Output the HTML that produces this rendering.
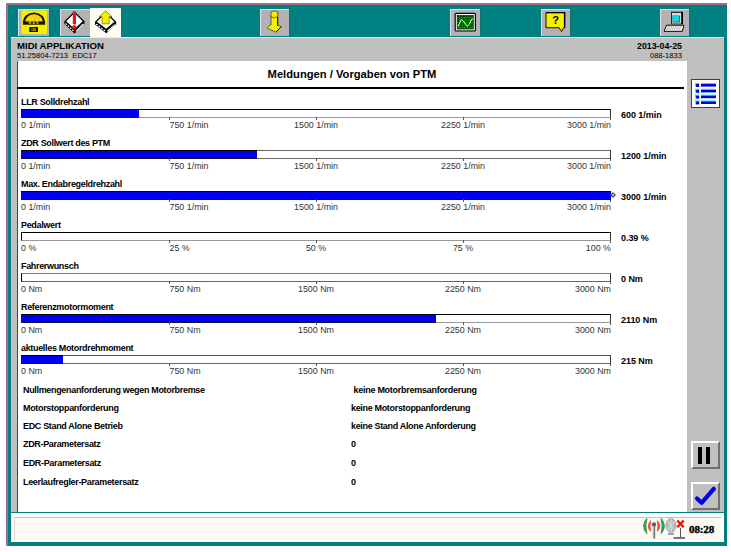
<!DOCTYPE html>
<html><head><meta charset="utf-8"><title>Meldungen / Vorgaben von PTM</title>
<style>
html,body{margin:0;padding:0;}
body{width:731px;height:552px;background:#fff;overflow:hidden;position:relative;font-family:"Liberation Sans",sans-serif;color:#000;}
.abs{position:absolute;}
#frame{left:6px;top:3px;width:721px;height:543px;background:#008080;}
#bt{left:6px;top:3px;width:721px;height:2px;background:#a0708c;}
#bl{left:6px;top:3px;width:2px;height:543px;background:#a0708c;}
.tb{top:9px;height:27px;background:#b2b2b2;box-shadow:inset 1px 1px 0 #dcdce4, 1px 0 0 #186c6c;}
#panel{left:11px;top:37px;width:713px;height:475px;background:#c0c0c0;box-shadow:inset 0 1px 0 #e8e8e8;}
#content{left:17px;top:61px;width:670px;height:451px;background:#fff;border-left:1px solid #444;box-sizing:border-box;}
#status{left:11px;top:513px;width:713px;height:29px;background:#fff;}
#status .in{left:3px;top:4px;width:707px;height:23px;background:#fffaf4;border-top:1px solid #c8c0bc;border-left:1px solid #dcd4d0;box-sizing:border-box;}
.h1{font-weight:bold;font-size:9.6px;line-height:10px;white-space:pre;}
.h2{font-size:7.6px;line-height:8px;white-space:pre;color:#000;}
.lab{left:21px;font-weight:bold;font-size:9px;line-height:10px;letter-spacing:-0.33px;white-space:pre;}
.val{left:621px;font-weight:bold;font-size:9px;line-height:10px;letter-spacing:-0.05px;white-space:pre;}
.bar{left:21px;width:590px;height:9px;border-top:1px solid #000;border-left:1px solid #000;border-right:1px solid #333;border-bottom:1px solid #999;box-sizing:border-box;}
.fill{left:21px;height:9px;background:#0000f0;border-top:1px solid #000;border-bottom:1px solid #114;box-sizing:border-box;}
.tk{font-size:8.9px;line-height:10px;white-space:pre;color:#333;}
.tick{width:1px;height:3px;background:#555;}
.txt{left:23px;font-weight:bold;font-size:9px;line-height:10px;letter-spacing:-0.33px;white-space:pre;}
.txv{left:351px;font-weight:bold;font-size:9px;line-height:10px;letter-spacing:-0.33px;white-space:pre;}
.btn{left:691px;width:29px;height:28px;background:#c0c0c0;box-sizing:border-box;border-top:2px solid #fff;border-left:2px solid #fff;border-right:2px solid #707070;border-bottom:2px solid #707070;}
</style></head><body>
<div class="abs" id="frame"></div>
<div class="abs" id="bt"></div><div class="abs" id="bl"></div>

<!-- toolbar -->
<div class="abs tb" style="left:18px;width:31px;"></div>
<div class="abs tb" style="left:60px;width:30px;"></div>
<div class="abs" style="left:90px;top:8px;width:31px;height:29px;background:#fffcf4;"></div>
<div class="abs tb" style="left:260px;width:29px;"></div>
<div class="abs tb" style="left:450px;width:30px;"></div>
<div class="abs tb" style="left:541px;width:29px;"></div>
<div class="abs tb" style="left:660px;width:29px;"></div>

<div class="abs" id="panel"></div>
<div class="abs h1" style="left:17px;top:41px;">MIDI APPLIKATION</div>
<div class="abs h2" style="left:17px;top:51.7px;">51.25804-7213  EDC17</div>
<div class="abs h1" style="left:582px;width:100px;text-align:right;top:41px;font-size:8.8px;">2013-04-25</div>
<div class="abs h2" style="left:582px;width:100px;text-align:right;top:51.7px;">088-1833</div>

<div class="abs" id="content"></div>
<div class="abs" style="left:17px;top:61px;width:670px;height:26px;line-height:26px;text-align:center;font-weight:bold;font-size:11.2px;">Meldungen / Vorgaben von PTM</div>
<div class="abs" style="left:17px;top:87px;width:667px;height:2px;background:#000;"></div>

<div class="abs" id="status"><div class="abs in"></div></div>
<div class="abs lab" style="top:97px;">LLR Solldrehzahl</div>
<div class="abs bar" style="top:109px;"></div>
<div class="abs fill" style="top:109px;width:118px;"></div>
<div class="abs tick" style="left:610px;top:118px;height:2px;"></div>
<div class="abs val" style="top:110px;">600 1/min</div>
<div class="abs tk" style="left:21px;top:120px;">0 1/min</div>
<div class="abs tick" style="left:169px;top:117px;"></div>
<div class="abs tk" style="left:169.5px;top:120px;">750 1/min</div>
<div class="abs tick" style="left:316px;top:117px;"></div>
<div class="abs tk" style="left:266px;width:100px;text-align:center;top:120px;">1500 1/min</div>
<div class="abs tick" style="left:463px;top:117px;"></div>
<div class="abs tk" style="left:413px;width:100px;text-align:center;top:120px;">2250 1/min</div>
<div class="abs tk" style="left:511px;width:100px;text-align:right;top:120px;">3000 1/min</div>
<div class="abs lab" style="top:138px;">ZDR Sollwert des PTM</div>
<div class="abs bar" style="top:150px;border-top-color:#666;border-bottom-color:#666;"></div>
<div class="abs fill" style="top:150px;width:236px;"></div>
<div class="abs tick" style="left:610px;top:159px;height:2px;"></div>
<div class="abs val" style="top:151px;">1200 1/min</div>
<div class="abs tk" style="left:21px;top:161px;">0 1/min</div>
<div class="abs tick" style="left:169px;top:158px;"></div>
<div class="abs tk" style="left:169.5px;top:161px;">750 1/min</div>
<div class="abs tick" style="left:316px;top:158px;"></div>
<div class="abs tk" style="left:266px;width:100px;text-align:center;top:161px;">1500 1/min</div>
<div class="abs tick" style="left:463px;top:158px;"></div>
<div class="abs tk" style="left:413px;width:100px;text-align:center;top:161px;">2250 1/min</div>
<div class="abs tk" style="left:511px;width:100px;text-align:right;top:161px;">3000 1/min</div>
<div class="abs lab" style="top:179px;">Max. Endabregeldrehzahl</div>
<div class="abs bar" style="top:191px;"></div>
<div class="abs fill" style="top:191px;width:590px;"></div>
<div class="abs tick" style="left:610px;top:200px;height:2px;"></div>
<div class="abs val" style="top:192px;">3000 1/min</div>
<div class="abs tk" style="left:21px;top:202px;">0 1/min</div>
<div class="abs tick" style="left:169px;top:199px;"></div>
<div class="abs tk" style="left:169.5px;top:202px;">750 1/min</div>
<div class="abs tick" style="left:316px;top:199px;"></div>
<div class="abs tk" style="left:266px;width:100px;text-align:center;top:202px;">1500 1/min</div>
<div class="abs tick" style="left:463px;top:199px;"></div>
<div class="abs tk" style="left:413px;width:100px;text-align:center;top:202px;">2250 1/min</div>
<div class="abs tk" style="left:511px;width:100px;text-align:right;top:202px;">3000 1/min</div>
<div class="abs lab" style="top:220px;">Pedalwert</div>
<div class="abs bar" style="top:232px;"></div>
<div class="abs tick" style="left:610px;top:241px;height:2px;"></div>
<div class="abs val" style="top:233px;">0.39 %</div>
<div class="abs tk" style="left:21px;top:243px;">0 %</div>
<div class="abs tick" style="left:169px;top:240px;"></div>
<div class="abs tk" style="left:169.5px;top:243px;">25 %</div>
<div class="abs tick" style="left:316px;top:240px;"></div>
<div class="abs tk" style="left:266px;width:100px;text-align:center;top:243px;">50 %</div>
<div class="abs tick" style="left:463px;top:240px;"></div>
<div class="abs tk" style="left:413px;width:100px;text-align:center;top:243px;">75 %</div>
<div class="abs tk" style="left:511px;width:100px;text-align:right;top:243px;">100 %</div>
<div class="abs lab" style="top:261px;">Fahrerwunsch</div>
<div class="abs bar" style="top:273px;border-top-color:#777;border-bottom-color:#666;"></div>
<div class="abs tick" style="left:610px;top:282px;height:2px;"></div>
<div class="abs val" style="top:274px;">0 Nm</div>
<div class="abs tk" style="left:21px;top:284px;">0 Nm</div>
<div class="abs tick" style="left:169px;top:281px;"></div>
<div class="abs tk" style="left:169.5px;top:284px;">750 Nm</div>
<div class="abs tick" style="left:316px;top:281px;"></div>
<div class="abs tk" style="left:266px;width:100px;text-align:center;top:284px;">1500 Nm</div>
<div class="abs tick" style="left:463px;top:281px;"></div>
<div class="abs tk" style="left:413px;width:100px;text-align:center;top:284px;">2250 Nm</div>
<div class="abs tk" style="left:511px;width:100px;text-align:right;top:284px;">3000 Nm</div>
<div class="abs lab" style="top:302px;">Referenzmotormoment</div>
<div class="abs bar" style="top:314px;"></div>
<div class="abs fill" style="top:314px;width:415px;"></div>
<div class="abs tick" style="left:610px;top:323px;height:2px;"></div>
<div class="abs val" style="top:315px;">2110 Nm</div>
<div class="abs tk" style="left:21px;top:325px;">0 Nm</div>
<div class="abs tick" style="left:169px;top:322px;"></div>
<div class="abs tk" style="left:169.5px;top:325px;">750 Nm</div>
<div class="abs tick" style="left:316px;top:322px;"></div>
<div class="abs tk" style="left:266px;width:100px;text-align:center;top:325px;">1500 Nm</div>
<div class="abs tick" style="left:463px;top:322px;"></div>
<div class="abs tk" style="left:413px;width:100px;text-align:center;top:325px;">2250 Nm</div>
<div class="abs tk" style="left:511px;width:100px;text-align:right;top:325px;">3000 Nm</div>
<div class="abs lab" style="top:343px;">aktuelles Motordrehmoment</div>
<div class="abs bar" style="top:355px;border-top-color:#555;border-bottom-color:#666;"></div>
<div class="abs fill" style="top:355px;width:42px;"></div>
<div class="abs tick" style="left:610px;top:364px;height:2px;"></div>
<div class="abs val" style="top:356px;">215 Nm</div>
<div class="abs tk" style="left:21px;top:366px;">0 Nm</div>
<div class="abs tick" style="left:169px;top:363px;"></div>
<div class="abs tk" style="left:169.5px;top:366px;">750 Nm</div>
<div class="abs tick" style="left:316px;top:363px;"></div>
<div class="abs tk" style="left:266px;width:100px;text-align:center;top:366px;">1500 Nm</div>
<div class="abs tick" style="left:463px;top:363px;"></div>
<div class="abs tk" style="left:413px;width:100px;text-align:center;top:366px;">2250 Nm</div>
<div class="abs tk" style="left:511px;width:100px;text-align:right;top:366px;">3000 Nm</div>
<div class="abs" style="left:611px;top:193px;width:4px;height:4px;border:1px solid #333;background:#ccc;transform:rotate(45deg);box-sizing:border-box;"></div>
<div class="abs txt" style="top:384.5px;">Nullmengenanforderung wegen Motorbremse</div>
<div class="abs txv" style="top:384.5px;left:353.5px;letter-spacing:-0.27px;">keine Motorbremsanforderung</div>
<div class="abs txt" style="top:402.5px;">Motorstoppanforderung</div>
<div class="abs txv" style="top:402.5px;">keine Motorstoppanforderung</div>
<div class="abs txt" style="top:421px;">EDC Stand Alone Betrieb</div>
<div class="abs txv" style="top:421px;">keine Stand Alone Anforderung</div>
<div class="abs txt" style="top:439px;">ZDR-Parametersatz</div>
<div class="abs txv" style="top:439px;">0</div>
<div class="abs txt" style="top:458px;">EDR-Parametersatz</div>
<div class="abs txv" style="top:458px;">0</div>
<div class="abs txt" style="top:477px;">Leerlaufregler-Parametersatz</div>
<div class="abs txv" style="top:477px;">0</div>
<svg class="abs" style="left:0;top:0;" width="731" height="40" viewBox="0 0 731 40">
 <!-- MAN logo -->
 <rect x="21.500" y="10.500" width="25.500" height="23.500" fill="#f4f000"/>
 <path d="M23.900 22.600 A10 9.200 0 0 1 44 22.600" fill="#f0c818" stroke="#181000" stroke-width="1.900"/>
 <path d="M27 21 L31 16 M31 21.500 L34.500 15 M36 21.500 L38.500 16 M40 21.500 L41.500 18" stroke="#f8e800" stroke-width="1.200"/>
 <rect x="22.900" y="21.400" width="22.200" height="3.300" fill="#181000"/>
 <text x="34" y="24.300" font-family="Liberation Sans, sans-serif" font-weight="bold" font-size="3.200" fill="#f4e000" text-anchor="middle" letter-spacing="1.200">MAN</text>
 <rect x="29.300" y="27" width="8.700" height="5" fill="#181000"/>
 <text x="33.600" y="31.200" font-family="Liberation Sans, sans-serif" font-weight="bold" font-size="4" fill="#e8d800" text-anchor="middle">i2i</text>

 <!-- diamond with exclamation -->
 <g>
  <polygon points="64.4,21.2 74.4,11.2 84.4,21.2 84.4,24 74.6,33.6 64.4,24" fill="#000"/>
  <polygon points="66.2,21.2 74.4,13 82.6,21.2 74.6,29" fill="#fff"/>
  <path d="M65.6 23.6 L74.2 31.6" stroke="#fff" stroke-width="1.3" stroke-dasharray="1.7 1.3"/>
  <path d="M76 31.4 L83.400 24" stroke="#fff" stroke-width="1.3"/>
  <rect x="72.800" y="11.400" width="3.200" height="12.800" fill="#f01020"/>
  <polygon points="74.300,24.400 77.200,27.200 74.300,30 71.400,27.200" fill="#f01020"/>
 </g>

 <!-- diamond with yellow up arrow -->
 <g>
  <polygon points="95,21.800 105.600,11.400 116.200,21.800 116.200,24.600 106.200,33.200 95,24.600" fill="#000"/>
  <polygon points="96.800,21.800 105.600,13.200 114.400,21.800 106.200,28.800" fill="#fffef4"/>
  <path d="M96.200 24.200 L105.600 31.400" stroke="#fff" stroke-width="1.300" stroke-dasharray="1.800 1.300"/>
  <path d="M107.400 31.200 L115.400 24.600" stroke="#fff" stroke-width="1.300"/>
  <polygon points="105.600,10.800 112,16.700 109.200,16.700 109.200,23.800 102,23.800 102,16.700 99.200,16.700" fill="#f4f000" stroke="#303000" stroke-width="0.500"/>
 </g>

 <!-- yellow 3D down arrow -->
 <g>
  <polygon points="271,12 274,10.8 277.8,12 277.8,25.6 281.6,26.4 276,32.2 267.2,28 270.2,25 271,25" fill="#f4f000" stroke="#3a3000" stroke-width="0.7"/>
  <path d="M271 16.5 L274 18 L277.8 16.5" fill="none" stroke="#3a3000" stroke-width="0.7"/>
  <path d="M277.6 17 L277.6 25.6" stroke="#282000" stroke-width="1"/>
  <path d="M281.4 26.6 L276 32" stroke="#282000" stroke-width="1"/>
 </g>

 <!-- scope -->
 <g>
  <rect x="454.6" y="12.8" width="21.4" height="18.8" rx="1.5" fill="#000"/>
  <rect x="455.8" y="14" width="19" height="16.4" fill="#fff"/>
  <rect x="456.8" y="15" width="17" height="14.4" fill="#004400"/>
  <path d="M457 17.5H474M457 20H474M457 22.500H474M457 25H474M457 27.5H474M459.500 15V29.400M462 15V29.400M464.500 15V29.400M467 15V29.400M469.500 15V29.400M472 15V29.400" stroke="#00c800" stroke-width="0.7" stroke-dasharray="1 0.6"/>
  <path d="M458 26.500 L461.400 19.300 L464 22 L467.200 26.300 L469.500 24 L471.600 19.300 L473 19" fill="none" stroke="#e8ffe8" stroke-width="1"/>
 </g>

 <!-- help bubble -->
 <g>
  <polygon points="546,12.600 564.600,12.600 564.600,27.700 563.600,27.700 561.600,31.600 559,27.700 546,27.700" fill="#f4f000" stroke="#181000" stroke-width="1"/>
  <path d="M546 12.600H564.600V27.700" fill="none" stroke="#000" stroke-width="1.4"/>
  <text x="555.700" y="24" font-family="Liberation Sans, sans-serif" font-weight="bold" font-size="11" text-anchor="middle" fill="#000">?</text>
 </g>

 <!-- computer -->
 <g>
  <rect x="671" y="11.800" width="12" height="12.400" fill="#000"/>
  <rect x="671.800" y="12.800" width="9.400" height="10.800" fill="#d8d8d8"/>
  <rect x="672.600" y="15.600" width="7.200" height="6.800" fill="#303038"/><rect x="672.600" y="15.600" width="6.600" height="6.200" fill="#00e0e8"/>
  <polygon points="666.700,25.200 683.800,25.200 682.400,31.300 664.100,31.300" fill="#fff" stroke="#000" stroke-width="1"/>
  <path d="M667.500 27H682M666.800 29H681.500" stroke="#444" stroke-width="0.8" stroke-dasharray="1 0.8"/>
 </g>
</svg>
<!-- list button -->
<div class="abs" style="left:691px;top:79px;width:29px;height:29px;background:#fffef8;border:1px solid #404040;box-sizing:border-box;"></div>
<svg class="abs" style="left:691px;top:79px;" width="29" height="29" viewBox="0 0 29 29">
 <g fill="#0000e0">
  <rect x="5" y="4.800" width="3.200" height="3.200"/><rect x="10" y="4.800" width="15" height="2.800"/>
  <rect x="5" y="10.600" width="3.200" height="3.200"/><rect x="10" y="10.600" width="15" height="2.800"/>
  <rect x="5" y="16.400" width="3.200" height="3.200"/><rect x="10" y="16.400" width="15" height="2.800"/>
  <rect x="5" y="22.200" width="3.200" height="3.200"/><rect x="10" y="22.200" width="15" height="2.800"/>
 </g>
 <g fill="#00e8f8">
  <rect x="4.200" y="4" width="4" height="0.900"/><rect x="10" y="4" width="14" height="0.900"/>
  <rect x="4.200" y="9.800" width="4" height="0.900"/><rect x="10" y="9.800" width="14" height="0.900"/>
  <rect x="4.200" y="15.600" width="4" height="0.900"/><rect x="10" y="15.600" width="14" height="0.900"/>
  <rect x="4.200" y="21.400" width="4" height="0.900"/><rect x="10" y="21.400" width="14" height="0.900"/>
  <rect x="4.200" y="4" width="0.900" height="4"/><rect x="4.200" y="9.800" width="0.900" height="4"/><rect x="4.200" y="15.600" width="0.900" height="4"/><rect x="4.200" y="21.400" width="0.900" height="4"/>
 </g>
</svg>
<!-- pause button -->
<div class="abs btn" style="top:441px;"></div>
<div class="abs" style="left:698px;top:447px;width:4px;height:17px;background:#000;"></div>
<div class="abs" style="left:706px;top:447px;width:4px;height:17px;background:#000;"></div>
<!-- check button -->
<div class="abs btn" style="top:482px;"></div>
<svg class="abs" style="left:691px;top:482px;" width="29" height="28" viewBox="0 0 29 28">
 <path d="M6 16.500 L10.600 20.800 L22.800 6.800" fill="none" stroke="#0000f0" stroke-width="4.200" stroke-linecap="round" stroke-linejoin="round"/>
</svg>
<!-- status icons -->
<svg class="abs" style="left:640px;top:516px;" width="50" height="26" viewBox="640 516 50 26">
 <g>
  <path d="M646.800 518.800 Q640.600 526 646.800 533.200 Q644.800 526 646.800 518.800 Z" fill="#30a050" stroke="#30a050" stroke-width="1.300" stroke-linejoin="round"/>
  <path d="M661.200 518.800 Q667.400 526 661.200 533.200 Q663.200 526 661.200 518.800 Z" fill="#30a050" stroke="#30a050" stroke-width="1.300" stroke-linejoin="round"/>
  <path d="M650.600 521 Q646.200 526 650.600 531 Q649.200 526 650.600 521 Z" fill="#f05038" stroke="#f05038" stroke-width="1.100" stroke-linejoin="round"/>
  <path d="M657.400 521 Q661.800 526 657.400 531 Q658.800 526 657.400 521 Z" fill="#f05038" stroke="#f05038" stroke-width="1.100" stroke-linejoin="round"/>
 </g>
 <circle cx="654" cy="524.500" r="2.200" fill="#606068"/>
 <rect x="652.800" y="526" width="2.400" height="12.500" fill="#707078"/>
 <rect x="653.200" y="526" width="0.800" height="12" fill="#c8c8d0"/>
 <!-- network -->
 <ellipse cx="671" cy="525.500" rx="5" ry="7" fill="#b8bcc0" stroke="#909498" stroke-width="0.800"/>
 <path d="M667 521 L675 530 M667 530 L675 521 M671 518.500 V532.500" stroke="#e8e8e8" stroke-width="0.800"/>
 <path d="M668 533 H674 V535 H668 Z" fill="#a0a4a8"/>
 <path d="M680.500 528 V537.500" stroke="#505860" stroke-width="1"/>
 <path d="M673.500 538 H685" stroke="#505860" stroke-width="1.600"/>
 <path d="M677.300 520.500 L683.700 527.300 M683.700 520.500 L677.300 527.300" stroke="#f01010" stroke-width="2.400"/>
</svg>

<div class="abs" style="left:689px;top:523px;font-family:'Liberation Serif',serif;font-weight:bold;font-size:11.2px;line-height:12px;letter-spacing:-0.2px;-webkit-text-stroke:0.35px #000;">08:28</div>
</body></html>
